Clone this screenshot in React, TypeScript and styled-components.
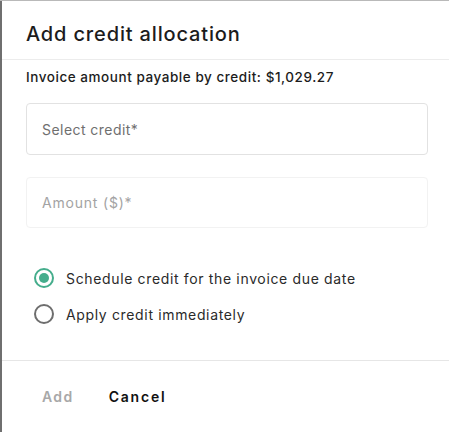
import React, { useState } from "react";
import styled, { createGlobalStyle } from "styled-components";

const GlobalStyle = createGlobalStyle`
  html, body {
    margin: 0;
    padding: 0;
  }
  body {
    font-family: "Inter", "Noto Sans", sans-serif;
    background: #7a7a7a;
  }
`;

const Backdrop = styled.div`
  width: 449px;
  height: 432px;
  padding: 1px 0 0 2px;
  box-sizing: border-box;
  background: linear-gradient(to bottom, #b9b9b9 0, #b9b9b9 1px, #6f6f6f 1px);
`;

const Dialog = styled.div`
  background: #ffffff;
  height: 100%;
  display: flex;
  flex-direction: column;
  box-sizing: border-box;
`;

const Header = styled.header`
  height: 59px;
  box-sizing: border-box;
  padding: 20px 24px 0;
  border-bottom: 1px solid #ececec;
`;

const Title = styled.h2`
  margin: 0;
  font-size: 20px;
  font-weight: 500;
  color: #1c1c1c;
  line-height: 26px;
  letter-spacing: 0.85px;
`;

const Body = styled.div`
  padding: 7px 21px 0 24px;
  display: flex;
  flex-direction: column;
`;

const Payable = styled.p`
  margin: 0;
  font-size: 13.5px;
  font-weight: 500;
  color: #1c1c1c;
  line-height: 20px;
  letter-spacing: 0.55px;
`;

const Field = styled.div<{ $faint?: boolean }>`
  height: ${(p) => (p.$faint ? 51 : 52)}px;
  margin-top: ${(p) => (p.$faint ? 22 : 16)}px;
  box-sizing: border-box;
  border: 1px solid ${(p) => (p.$faint ? "#f2f2f2" : "#e2e2e2")};
  border-radius: 4px;
  display: flex;
  align-items: center;
  padding: 0 15px;
  font-size: 14px;
  letter-spacing: ${(p) => (p.$faint ? 0.8 : 0.45)}px;
  color: ${(p) => (p.$faint ? "#a3a3a3" : "#6f6f6f")};
`;

const RadioGroup = styled.div`
  margin-top: 32px;
  display: flex;
  flex-direction: column;
`;

const RadioRow = styled.label`
  height: 36px;
  display: flex;
  align-items: center;
  gap: 12px;
  padding-left: 8px;
  font-size: 14px;
  color: #2a2a2a;
  letter-spacing: 0.65px;
  cursor: pointer;
`;

const RadioCircle = styled.span<{ $checked: boolean }>`
  width: 20px;
  height: 20px;
  box-sizing: border-box;
  border-radius: 50%;
  border: 2px solid ${(p) => (p.$checked ? "#45ad8c" : "#6e6e6e")};
  display: flex;
  align-items: center;
  justify-content: center;
  &::after {
    content: "";
    width: 10px;
    height: 10px;
    border-radius: 50%;
    background: #45ad8c;
    display: ${(p) => (p.$checked ? "block" : "none")};
  }
`;

const Footer = styled.footer`
  margin-top: 28px;
  border-top: 1px solid #e6e6e6;
  flex: 1;
  display: flex;
  align-items: center;
  gap: 3px;
  padding: 0 24px 0 24px;
`;

const Button = styled.button<{ $disabled?: boolean }>`
  border: none;
  background: none;
  padding: 6px 16px;
  font-family: inherit;
  font-size: 14px;
  font-weight: 600;
  letter-spacing: ${(p) => (p.$disabled ? 1.4 : 1.8)}px;
  color: ${(p) => (p.$disabled ? "#a8a8a8" : "#111111")};
  cursor: ${(p) => (p.$disabled ? "default" : "pointer")};
`;

export default function App() {
  const [choice, setChoice] = useState("schedule");

  return (
    <Backdrop>
      <GlobalStyle />
      <Dialog>
        <Header>
          <Title>Add credit allocation</Title>
        </Header>
        <Body>
          <Payable>Invoice amount payable by credit: $1,029.27</Payable>
          <Field>Select credit*</Field>
          <Field $faint>Amount ($)*</Field>
          <RadioGroup>
            <RadioRow onClick={() => setChoice("schedule")}>
              <RadioCircle $checked={choice === "schedule"} />
              Schedule credit for the invoice due date
            </RadioRow>
            <RadioRow onClick={() => setChoice("now")}>
              <RadioCircle $checked={choice === "now"} />
              Apply credit immediately
            </RadioRow>
          </RadioGroup>
        </Body>
        <Footer>
          <Button $disabled>Add</Button>
          <Button>Cancel</Button>
        </Footer>
      </Dialog>
    </Backdrop>
  );
}
